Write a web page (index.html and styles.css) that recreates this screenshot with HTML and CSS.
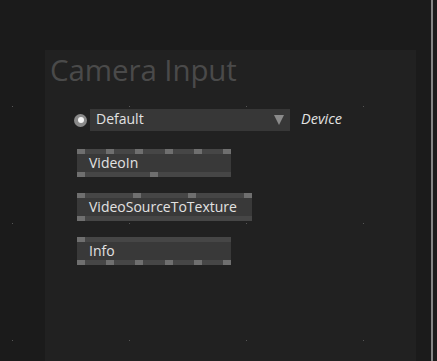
FILE: index.html
```html
<!DOCTYPE html>
<html>
<head>
<meta charset="utf-8">
<link rel="stylesheet" href="styles.css">
</head>
<body>
<div class="stage">
  <div class="panel">
    <div class="title">Camera Input</div>
    <div class="row">
      <span class="radio"><span class="radio-dot"></span></span>
      <div class="select">
        <span class="select-text">Default</span>
        <svg class="caret" width="10" height="10" viewBox="0 0 10 10"><polygon points="0,0 10,0 5,10" fill="#8a8a8a"/></svg>
      </div>
      <span class="device">Device</span>
    </div>
    <div class="nodes">
      <div class="node w154">
        <div class="pins spread"><i></i><i></i><i></i><i></i><i></i><i></i></div>
        <div class="label">VideoIn</div>
        <div class="pins two"><i></i><i></i></div>
      </div>
      <div class="node w175">
        <div class="pins spread"><i></i><i></i><i></i><i></i></div>
        <div class="label">VideoSourceToTexture</div>
        <div class="pins"><i></i></div>
      </div>
      <div class="node w154">
        <div class="pins"><i></i></div>
        <div class="label">Info</div>
        <div class="pins spread"><i></i><i></i><i></i><i></i><i></i><i></i></div>
      </div>
    </div>
  </div>
  <div class="rule"></div>
</div>
<div class="dots">
  <i></i><i></i><i></i><i></i>
  <i></i><i></i><i></i><i></i>
  <i></i><i></i><i></i><i></i>
</div>
</body>
</html>
```
FILE: styles.css
```css
html, body {
  margin: 0;
  padding: 0;
  background: #1b1b1b;
  width: 437px;
  height: 361px;
  overflow: hidden;
  font-family: "Open Sans", "Noto Sans", sans-serif;
}
.stage {
  display: flex;
  height: 361px;
}
.panel {
  margin-left: 45px;
  margin-top: 50px;
  width: 371px;
  background: #212121;
  display: flex;
  flex-direction: column;
}
.title {
  color: #4a4a4a;
  font-size: 29.5px;
  line-height: 34px;
  margin-top: 3px;
  padding-left: 5px;
  letter-spacing: -0.1px;
}
.row {
  display: flex;
  align-items: center;
  margin-top: 22px;
  height: 22px;
}
.radio {
  margin-left: 29px;
  width: 13px;
  height: 13px;
  border-radius: 50%;
  background: #8a8a8a;
  display: flex;
  align-items: center;
  justify-content: center;
}
.radio-dot {
  width: 6px;
  height: 6px;
  border-radius: 50%;
  background: #f4f4f4;
}
.select {
  margin-left: 3px;
  width: 200px;
  height: 22px;
  background: #373737;
  display: flex;
  align-items: center;
  justify-content: space-between;
  box-sizing: border-box;
  padding: 0 6px 0 6px;
}
.select-text {
  color: #e2e2e2;
  font-size: 14px;
  line-height: 18px;
  padding-bottom: 2px;
}
.caret {
  display: block;
}
.device {
  margin-left: 11px;
  color: #e2e2e2;
  font-size: 14.5px;
  font-style: italic;
  line-height: 18px;
  padding-bottom: 3px;
}
.nodes {
  margin-top: 18px;
  margin-left: 32px;
  display: flex;
  flex-direction: column;
  align-items: flex-start;
  gap: 16px;
}
.node {
  height: 28px;
  background: #393939;
  display: flex;
  flex-direction: column;
}
.w154 { width: 154px; }
.w175 { width: 175px; }
.pins {
  height: 5px;
  background: #464646;
  display: flex;
}
.pins.spread { justify-content: space-between; }
.pins.two { gap: 65px; }
.pins i {
  width: 8px;
  height: 5px;
  background: #6f6f6f;
}
.label {
  flex: 1;
  color: #e2e2e2;
  font-size: 14px;
  line-height: 18px;
  padding-left: 12px;
}
.rule {
  margin-left: 15px;
  width: 2px;
  background: #858585;
}
.dots {
  position: absolute;
  left: 12px;
  top: 106px;
  display: grid;
  grid-template-columns: 117px 117px 117px 1px;
  grid-template-rows: 117px 117px 1px;
  pointer-events: none;
}
.dots i {
  width: 1px;
  height: 1px;
  background: #555;
}
```
